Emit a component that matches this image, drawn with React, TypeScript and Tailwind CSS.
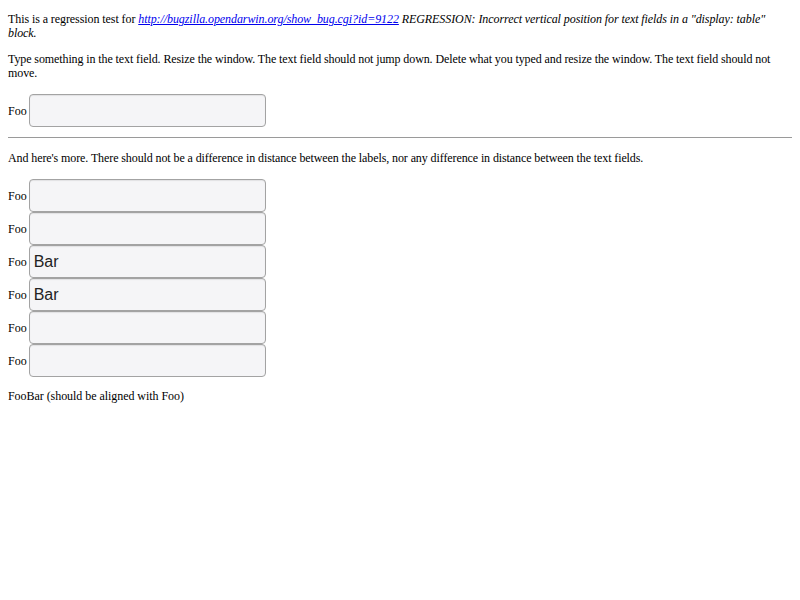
import type { FC } from 'react';

const Field: FC<{ value?: string }> = ({ value = '' }) => (
  <div className="flex items-center">
    <span>Foo</span>
    <input
      readOnly
      value={value}
      className="ml-[2px] h-[33px] w-[237px] rounded-[4px] border border-[#a3a3a3] bg-[#f5f5f7] pl-[4px] font-['Liberation_Sans',sans-serif] text-[16px] text-[#222] shadow-[inset_0_1px_1px_rgba(0,0,0,0.08)] outline-none"
    />
  </div>
);

const App: FC = () => {
  return (
    <div className="min-h-screen bg-white px-2 font-['Liberation_Serif',serif] text-[12px] leading-[14px] text-black">
      <p className="pt-[12px] tracking-[-0.08px]">
        This is a regression test for{' '}
        <a href="#" className="italic text-[#0000ee] underline">
          http://bugzilla.opendarwin.org/show_bug.cgi?id=9122
        </a>{' '}
        <i>REGRESSION: Incorrect vertical position for text fields in a "display: table" block.</i>
      </p>

      <p className="mt-[12px] tracking-[-0.1px]">
        Type something in the text field. Resize the window. The text field should not jump down.
        Delete what you typed and resize the window. The text field should not move.
      </p>

      <div className="mt-[14px]">
        <Field />
      </div>

      <hr className="mt-[10px] border-t border-[#9a9a9a]" />

      <p className="mt-[13px] tracking-[-0.1px]">
        And here's more. There should not be a difference in distance between the labels, nor any
        difference in distance between the text fields.
      </p>

      <div className="mt-[14px] flex flex-col">
        <Field />
        <Field />
        <Field value="Bar" />
        <Field value="Bar" />
        <Field />
        <Field />
      </div>

      <p className="mt-[12px] tracking-[-0.05px]">FooBar (should be aligned with Foo)</p>
    </div>
  );
};

export default App;
